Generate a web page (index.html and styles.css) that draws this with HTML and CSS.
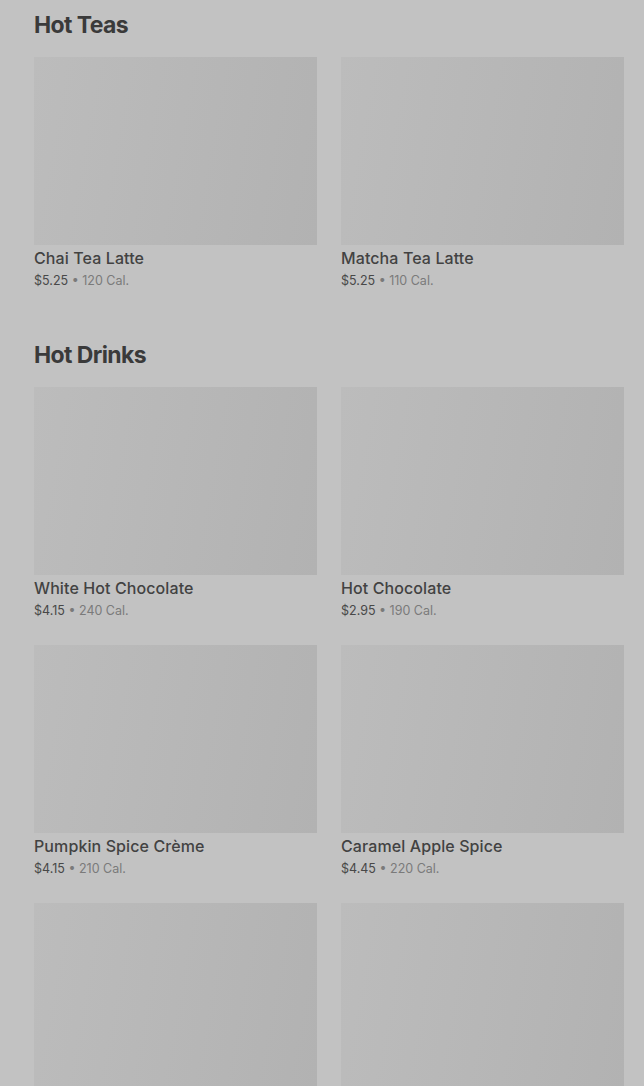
FILE: index.html
```html
<!DOCTYPE html>
<html lang="en">
  <head>
    <meta charset="UTF-8" />
    <meta name="viewport" content="width=device-width, initial-scale=1.0" />
    <title>Menu</title>
    <link rel="stylesheet" href="styles.css">
  </head>
  <body>
    <div class="menu">
      <section class="category">
        <h2 class="category_title">Hot Teas</h2>
        <div class="items">
          <div class="item">
            <div class="item_pic"></div>
            <h3 class="item_name">Chai Tea Latte</h3>
            <p class="item_info">$5.25 <span class="cal">• 120 Cal.</span></p>
          </div>
          <div class="item">
            <div class="item_pic"></div>
            <h3 class="item_name">Matcha Tea Latte</h3>
            <p class="item_info">$5.25 <span class="cal">• 110 Cal.</span></p>
          </div>
        </div>
      </section>

      <section class="category">
        <h2 class="category_title">Hot Drinks</h2>
        <div class="items">
          <div class="item">
            <div class="item_pic"></div>
            <h3 class="item_name">White Hot Chocolate</h3>
            <p class="item_info">$4.15 <span class="cal">• 240 Cal.</span></p>
          </div>
          <div class="item">
            <div class="item_pic"></div>
            <h3 class="item_name">Hot Chocolate</h3>
            <p class="item_info">$2.95 <span class="cal">• 190 Cal.</span></p>
          </div>
          <div class="item">
            <div class="item_pic"></div>
            <h3 class="item_name">Pumpkin Spice Crème</h3>
            <p class="item_info">$4.15 <span class="cal">• 210 Cal.</span></p>
          </div>
          <div class="item">
            <div class="item_pic"></div>
            <h3 class="item_name">Caramel Apple Spice</h3>
            <p class="item_info">$4.45 <span class="cal">• 220 Cal.</span></p>
          </div>
          <div class="item">
            <div class="item_pic"></div>
          </div>
          <div class="item">
            <div class="item_pic"></div>
          </div>
        </div>
      </section>
    </div>
  </body>
</html>
```

FILE: styles.css
```css
* {
  margin: 0;
  padding: 0;
  box-sizing: border-box;
}
body {
  background-color: rgb(194, 194, 194);
  font-family: Inter, "Liberation Sans", sans-serif;
  overflow: hidden;
}
.menu {
  padding: 9px 20px 0 34px;
  display: flex;
  flex-direction: column;
  gap: 50px;
}
.category_title {
  font-size: 23px;
  line-height: 32px;
  font-weight: 700;
  letter-spacing: -0.6px;
  color: rgb(58, 58, 58);
  margin-bottom: 16px;
}
.items {
  display: grid;
  grid-template-columns: 1fr 1fr;
  column-gap: 24px;
  row-gap: 26px;
}
.item_pic {
  height: 188px;
  background: linear-gradient(100deg, rgb(188, 188, 188), rgb(178, 178, 178));
}
.item_name {
  margin-top: 3px;
  font-size: 16px;
  line-height: 20px;
  font-weight: 500;
  letter-spacing: 0.1px;
  color: rgb(66, 66, 66);
}
.item_info {
  margin-top: 4px;
  font-size: 12.5px;
  line-height: 17px;
  color: rgb(72, 72, 72);
}
.cal {
  color: rgb(122, 122, 122);
}
```
